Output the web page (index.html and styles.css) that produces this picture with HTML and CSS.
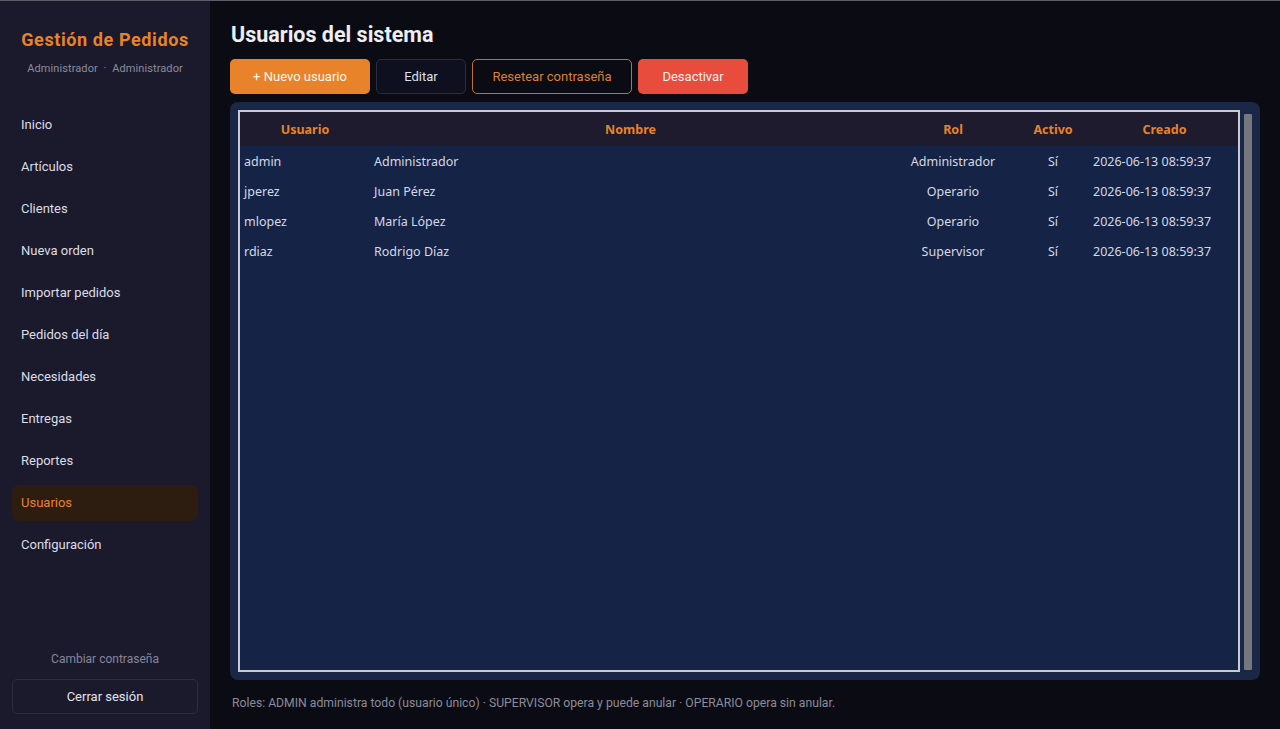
FILE: index.html
```html
<!DOCTYPE html>
<html lang="es">
<head>
    <meta charset="UTF-8">
    <meta name="viewport" content="width=device-width, initial-scale=1.0">
    <title>Gestión de Pedidos - Usuarios</title>
    <link rel="stylesheet" href="styles.css">
</head>
<body>

<div class="app">
    <aside class="sidebar">
        <div class="brand">
            <h1>Gestión de Pedidos</h1>
            <p class="who">Administrador &nbsp;·&nbsp; Administrador</p>
        </div>

        <nav class="nav">
            <a href="#">Inicio</a>
            <a href="#">Artículos</a>
            <a href="#">Clientes</a>
            <a href="#">Nueva orden</a>
            <a href="#">Importar pedidos</a>
            <a href="#">Pedidos del día</a>
            <a href="#">Necesidades</a>
            <a href="#">Entregas</a>
            <a href="#">Reportes</a>
            <a href="#" class="active">Usuarios</a>
            <a href="#">Configuración</a>
        </nav>

        <div class="side-bottom">
            <a href="#" class="change-pass">Cambiar contraseña</a>
            <button class="logout">Cerrar sesión</button>
        </div>
    </aside>

    <main class="main">
        <h2>Usuarios del sistema</h2>

        <div class="toolbar">
            <button class="btn btn-primary">+ Nuevo usuario</button>
            <button class="btn btn-dark">Editar</button>
            <button class="btn btn-outline">Resetear contraseña</button>
            <button class="btn btn-danger">Desactivar</button>
        </div>

        <div class="panel">
            <div class="table-box">
                <table class="users">
                    <thead>
                        <tr>
                            <th class="c-user">Usuario</th>
                            <th class="c-name">Nombre</th>
                            <th class="c-rol">Rol</th>
                            <th class="c-act">Activo</th>
                            <th class="c-date">Creado</th>
                        </tr>
                    </thead>
                    <tbody id="userRows"></tbody>
                </table>
            </div>
            <div class="scrollbar"></div>
        </div>

        <p class="note">Roles: ADMIN administra todo (usuario único) · SUPERVISOR opera y puede anular · OPERARIO opera sin anular.</p>
    </main>
</div>

<script>
    const users = [
        { user: 'admin', name: 'Administrador', rol: 'Administrador', active: true, created: '2026-06-13 08:59:37' },
        { user: 'jperez', name: 'Juan Pérez', rol: 'Operario', active: true, created: '2026-06-13 08:59:37' },
        { user: 'mlopez', name: 'María López', rol: 'Operario', active: true, created: '2026-06-13 08:59:37' },
        { user: 'rdiaz', name: 'Rodrigo Díaz', rol: 'Supervisor', active: true, created: '2026-06-13 08:59:37' }
    ];

    const tbody = document.getElementById('userRows');
    users.forEach(u => {
        const tr = document.createElement('tr');
        tr.innerHTML = `
            <td class="c-user">${u.user}</td>
            <td class="c-name">${u.name}</td>
            <td class="c-rol">${u.rol}</td>
            <td class="c-act">${u.active ? 'Sí' : 'No'}</td>
            <td class="c-date">${u.created}</td>`;
        tbody.appendChild(tr);
    });
</script>

</body>
</html>
```

FILE: styles.css
```css
* {
    box-sizing: border-box;
}
body {
    margin: 0;
    height: 729px;
    overflow: hidden;
    background-color: #0b0b13;
    color: #e2e3ec;
    font-family: Roboto, "Liberation Sans", sans-serif;
    border-top: 1px solid #5c5c68;
}
.app {
    display: flex;
    height: 728px;
}

/* sidebar */
.sidebar {
    width: 210px;
    flex-shrink: 0;
    background-color: #1b1a2d;
    display: flex;
    flex-direction: column;
    padding: 0 12px 15px;
}
.brand {
    text-align: center;
    padding-top: 28px;
}
.brand h1 {
    margin: 0;
    font-size: 18px;
    font-weight: 700;
    color: #e8832a;
    letter-spacing: 0.6px;
}
.brand .who {
    margin: 12px 0 0;
    font-size: 11px;
    letter-spacing: 0.1px;
    color: #8a8c9e;
}
.nav {
    margin-top: 32px;
    display: flex;
    flex-direction: column;
    gap: 6px;
}
.nav a {
    display: block;
    height: 36px;
    line-height: 36px;
    padding: 0 9px;
    border-radius: 7px;
    font-size: 13px;
    color: #dcdde6;
    text-decoration: none;
}
.nav a.active {
    background-color: #2c1d10;
    color: #e8832a;
}
.side-bottom {
    margin-top: auto;
    display: flex;
    flex-direction: column;
    align-items: stretch;
    gap: 13px;
}
.change-pass {
    text-align: center;
    font-size: 12px;
    color: #85879a;
    text-decoration: none;
}
.logout {
    height: 35px;
    background: transparent;
    border: 1px solid #2b2c40;
    border-radius: 5px;
    color: #e2e3ec;
    font-family: inherit;
    font-size: 13px;
}

/* main */
.main {
    flex: 1;
    display: flex;
    flex-direction: column;
    padding: 21px 20px 0 20px;
}
.main h2 {
    margin: 0 0 12px 1px;
    font-size: 21.5px;
    font-weight: 700;
    color: #eceef4;
    line-height: 25px;
}
.toolbar {
    display: flex;
    gap: 6px;
    margin-bottom: 8px;
}
.btn {
    height: 35px;
    border-radius: 5px;
    font-family: inherit;
    font-size: 13px;
    cursor: pointer;
    border: 1px solid transparent;
}
.btn-primary {
    width: 140px;
    background-color: #e8832a;
    color: #fff6ec;
}
.btn-dark {
    width: 90px;
    background-color: #0e1020;
    border-color: #2a2c40;
    color: #dfe0e8;
}
.btn-outline {
    width: 160px;
    background-color: transparent;
    border-color: #c0702a;
    color: #d9822f;
}
.btn-danger {
    width: 110px;
    background-color: #e74c3c;
    color: #fdeeee;
}

.panel {
    height: 578px;
    background-color: #1a2747;
    border-radius: 8px;
    padding: 8px;
    display: flex;
    gap: 4px;
}
.table-box {
    flex: 1;
    border: 2px solid #c9cbd4;
    background-color: #152346;
    overflow: hidden;
}
.scrollbar {
    width: 8px;
    margin: 4px 0 2px;
    background-color: #767880;
    border-radius: 1px;
}
.users {
    width: 100%;
    border-collapse: collapse;
    table-layout: fixed;
    font-family: "Noto Sans", "Open Sans", sans-serif;
    font-size: 12.5px;
    color: #d6d9e4;
}
.users thead th {
    height: 34px;
    background-color: #1d1b2d;
    color: #e8832a;
    font-weight: 700;
    text-align: center;
}
.users td {
    height: 30px;
    padding: 0 4px;
}
.c-user { width: 130px; }
.c-name { width: auto; }
.c-rol { width: 124px; }
.c-act { width: 76px; }
.c-date { width: 147px; }
td.c-rol, td.c-act { text-align: center; }
td.c-date { padding-left: 2px; }

.note {
    margin: 16px 0 0 2px;
    font-size: 12.2px;
    color: #8a8c9c;
}
```
